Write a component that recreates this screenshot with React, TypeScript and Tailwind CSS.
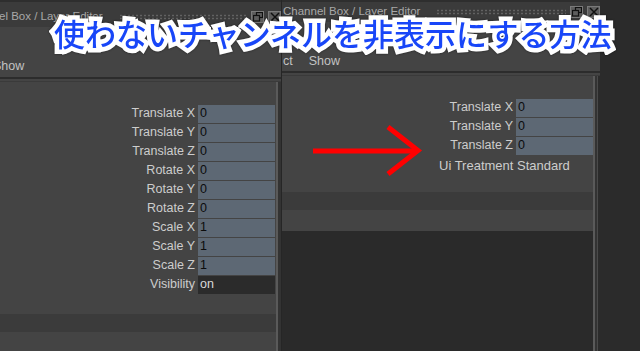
import React from "react";

const font = "font-['Liberation_Sans',Arial,sans-serif]";

function Grip({ className }: { className: string }) {
  return (
    <div
      className={`h-[6px] bg-[radial-gradient(circle,#626262_0.8px,transparent_1.2px)] bg-[length:4px_3px] ${className}`}
    />
  );
}

function TitleButtons() {
  return (
    <div className="flex items-center gap-[4px]">
      <div className="w-[13px] h-[12px] bg-[#5e5e5e] border border-[#7a7a7a] flex items-center justify-center">
        <svg width="10" height="10" viewBox="0 0 10 10">
          <rect x="3.5" y="0.5" width="6" height="5" fill="none" stroke="#111" strokeWidth="1.2" />
          <rect x="0.5" y="3.5" width="6" height="5.5" fill="#5e5e5e" stroke="#111" strokeWidth="1.2" />
        </svg>
      </div>
      <div className="w-[13px] h-[12px] bg-[#5e5e5e] border border-[#7a7a7a] flex items-center justify-center">
        <svg width="10" height="10" viewBox="0 0 10 10">
          <path d="M1 1 L9 9 M9 1 L1 9" stroke="#111" strokeWidth="1.5" />
        </svg>
      </div>
    </div>
  );
}

function Row({
  label,
  value,
  labelW,
  dark,
}: {
  label: string;
  value: string;
  labelW: string;
  dark?: boolean;
}) {
  return (
    <div className="flex items-center h-[19px]">
      <div className={`${labelW} text-right pr-[3px] text-[12.5px] text-[#cdcdcd] leading-none`}>{label}</div>
      <div
        className={`w-[77px] h-[18px] flex items-center pl-[2px] text-[12.5px] leading-none ${
          dark ? "bg-[#2b2b2b] text-[#d8d8d8]" : "bg-[#5d6874] text-[#0c0c0c]"
        }`}
      >
        {value}
      </div>
    </div>
  );
}

export default function App() {
  const leftRows: [string, string][] = [
    ["Translate X", "0"],
    ["Translate Y", "0"],
    ["Translate Z", "0"],
    ["Rotate X", "0"],
    ["Rotate Y", "0"],
    ["Rotate Z", "0"],
    ["Scale X", "1"],
    ["Scale Y", "1"],
    ["Scale Z", "1"],
  ];
  return (
    <div className={`relative w-[640px] h-[351px] overflow-hidden bg-[#2b2b2b] flex ${font}`}>
      {/* Left window */}
      <div className="w-[281px] h-full flex flex-col bg-[#444444] shrink-0">
        <div className="h-[27px] bg-[#3b3b3b] border-t-2 border-[#2e2e2e] flex items-center pt-[4px] overflow-hidden">
          <span className="text-[11.5px] text-[#a8a8a8] whitespace-nowrap -ml-[1px]">el Box / Layer Editor</span>
          <Grip className="ml-[16px] w-[130px]" />
          <div className="ml-[4px]">
            <TitleButtons />
          </div>
        </div>
        <div className="h-[29px]" />
        <div className="h-[20px] flex items-center">
          <span className="text-[12.5px] text-[#c2c2c2] -ml-[7px]">Show</span>
        </div>
        <div className="h-[5px] border-t-2 border-[#2c2c2c] border-b border-b-[#3a3a3a] mt-[1px]" />
        <div className="flex-1 flex">
          <div className="w-[278px] border-r-2 border-[#5a5a5a] flex flex-col pt-[22px]">
            {leftRows.map(([l, v]) => (
              <Row key={l} label={l} value={v} labelW="w-[198px]" />
            ))}
            <Row label="Visibility" value="on" labelW="w-[198px]" dark />
            <div className="h-[20px]" />
            <div className="h-[18px] bg-[#3b3b3b]" />
            <div className="flex-1" />
          </div>
          <div className="w-[3px] bg-[#333333]" />
        </div>
      </div>
      <div className="w-[1px] h-full bg-[#262626] shrink-0" />
      {/* Right window */}
      <div className="w-[318px] h-full flex flex-col shrink-0">
        <div className="h-[22px] bg-[#3b3b3b] border-t-2 border-[#2e2e2e] flex items-center overflow-hidden">
          <span className="text-[11.5px] text-[#a8a8a8] whitespace-nowrap ml-[1px]">Channel Box / Layer Editor</span>
          <Grip className="ml-[16px] w-[130px]" />
          <div className="ml-[4px]">
            <TitleButtons />
          </div>
        </div>
        <div className="h-[29px] bg-[#444444]" />
        <div className="h-[20px] flex items-center bg-[#444444]">
          <span className="text-[12.5px] text-[#c2c2c2] ml-[1px]">ct</span>
          <span className="text-[12.5px] text-[#c2c2c2] ml-[16px]">Show</span>
        </div>
        <div className="h-[5px] bg-[#444444] border-t-2 border-[#2c2c2c] border-b border-b-[#3a3a3a]" />
        <div className="flex-1 flex">
          <div className="w-[313px] border-r-2 border-[#5a5a5a] flex flex-col">
            <div className="bg-[#444444] flex flex-col pt-[22px]">
              <Row label="Translate X" value="0" labelW="w-[234px]" />
              <Row label="Translate Y" value="0" labelW="w-[234px]" />
              <Row label="Translate Z" value="0" labelW="w-[234px]" />
              <div className="h-[22px] flex items-center pl-[157px] text-[13px] text-[#cdcdcd]">
                Ui Treatment Standard
              </div>
              <div className="h-[15px]" />
              <div className="h-[18px] bg-[#3b3b3b]" />
              <div className="h-[21px]" />
            </div>
            <div className="flex-1 bg-[#2a2a2a]" />
          </div>
          <div className="w-[3px] bg-[#333333] border-r border-[#4a4a4a]" />
        </div>
      </div>

      {/* Red arrow */}
      <svg className="absolute left-[310px] top-[122px]" width="115" height="56" viewBox="0 0 115 56">
        <path d="M3 29 L106 29" stroke="#ff0000" strokeWidth="5" />
        <path d="M78 5 L108 28.5 L78 52" stroke="#ff0000" strokeWidth="5" fill="none" strokeLinejoin="miter" />
      </svg>

      {/* Overlay title */}
      <div className="absolute left-[54px] top-[17px] whitespace-nowrap text-[31px] leading-none font-medium text-[#1846f8] font-['Noto_Sans_CJK_JP',sans-serif] [-webkit-text-stroke:9px_white] [paint-order:stroke_fill] drop-shadow-[0_0_1px_rgba(0,0,0,0.5)]">
        使わないチャンネルを非表示にする方法
      </div>
    </div>
  );
}
